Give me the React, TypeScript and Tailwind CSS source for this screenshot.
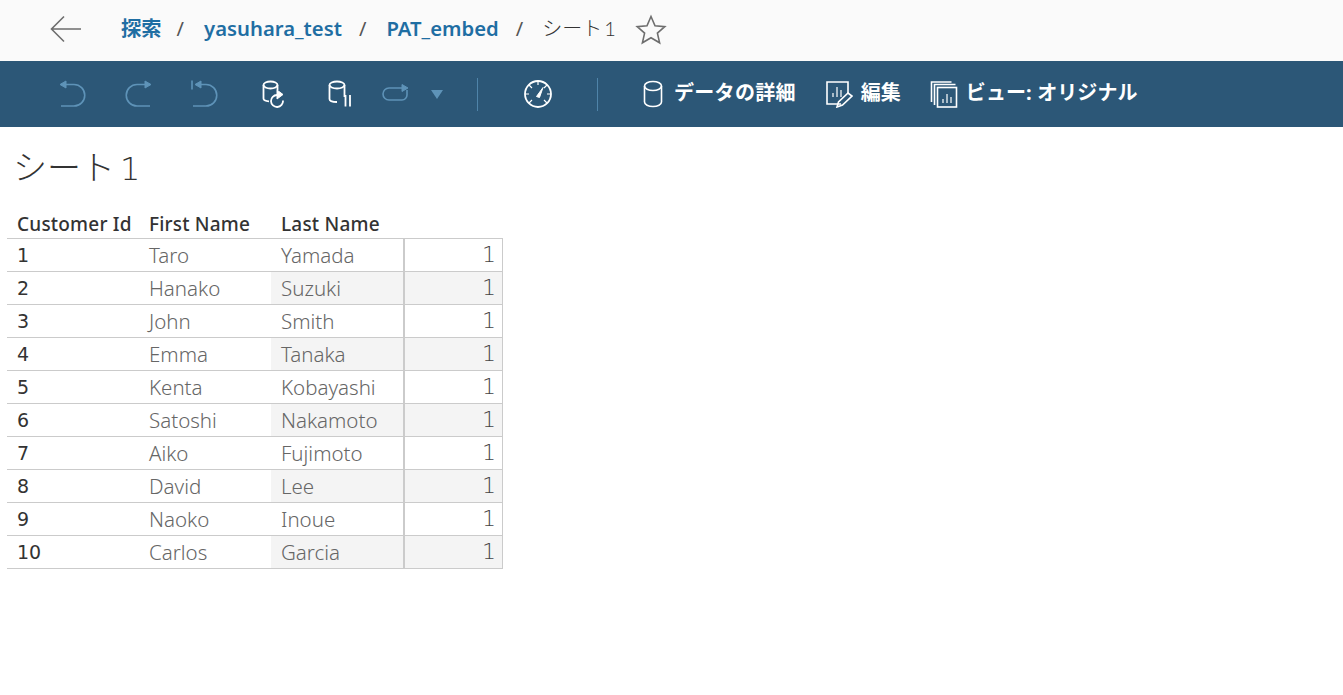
import React from "react";

const rows = [
  ["1", "Taro", "Yamada"],
  ["2", "Hanako", "Suzuki"],
  ["3", "John", "Smith"],
  ["4", "Emma", "Tanaka"],
  ["5", "Kenta", "Kobayashi"],
  ["6", "Satoshi", "Nakamoto"],
  ["7", "Aiko", "Fujimoto"],
  ["8", "David", "Lee"],
  ["9", "Naoko", "Inoue"],
  ["10", "Carlos", "Garcia"],
];

const font = "font-['Noto_Sans','Noto_Sans_CJK_JP',sans-serif]";

function Icon({ w, h, className, children }: { w: number; h: number; className?: string; children: React.ReactNode }) {
  return (
    <svg width={w} height={h} viewBox={`0 0 ${w} ${h}`} fill="none" stroke="currentColor" strokeWidth="1.6" className={className}>
      {children}
    </svg>
  );
}

function Crumb({ children }: { children: React.ReactNode }) {
  return <span className="text-[20.3px] font-semibold text-[#1f6ea3] leading-none">{children}</span>;
}

function Slash({ className }: { className: string }) {
  return <span className={`text-[20px] text-[#555] leading-none ${className}`}>/</span>;
}

export default function App() {
  return (
    <div className={`${font} w-[1343px] h-[695px] bg-white overflow-hidden`}>
      {/* Breadcrumb */}
      <header className="h-[61px] bg-[#fafafa] flex items-center pl-[50px]">
        <Icon w={32} h={28} className="text-[#6e6e6e] mt-[-3px]">
          <path d="M31 14H2M14 1.5 1.5 14 14 26.5" />
        </Icon>
        <div className="flex items-center ml-[39px] mt-[-4px]">
          <Crumb>探索</Crumb>
          <Slash className="ml-[15px] mr-[20px]" />
          <Crumb>yasuhara_test</Crumb>
          <Slash className="ml-[17px] mr-[20px]" />
          <Crumb>PAT_embed</Crumb>
          <Slash className="ml-[17px] mr-[19px]" />
          <span className="text-[20px] text-[#333] font-light leading-none">
            シート<span className="font-['Lato'] ml-[2px]">1</span>
          </span>
        </div>
        <Icon w={32} h={32} className="text-[#6e6e6e] ml-[19px] mt-[-2px]">
          <path d="M16 2.5l4 9.2 9.8.9-7.4 6.5 2.2 9.7-8.6-5.1-8.6 5.1 2.2-9.7L2.2 12.6l9.8-.9z" />
        </Icon>
      </header>

      {/* Toolbar */}
      <div className="h-[66px] bg-[#2c5777] flex items-center pl-[58px] text-white">
        <Icon w={28} h={28} className="text-[#5e93b8]">
          <path d="M3 4.5H16a10.75 10.75 0 0 1 0 21.5H3" />
          <path d="M2 4.5l6-3.5v7z" fill="currentColor" strokeWidth="1" />
        </Icon>
        <Icon w={28} h={28} className="text-[#5e93b8] ml-[39px]">
          <path d="M25 4.5H12a10.75 10.75 0 0 0 0 21.5h13" />
          <path d="M26 4.5l-6-3.5v7z" fill="currentColor" strokeWidth="1" />
        </Icon>
        <Icon w={28} h={28} className="text-[#5e93b8] ml-[37px]">
          <path d="M2 0.5v9" />
          <path d="M6 4.5H16a10.75 10.75 0 0 1 0 21.5H3" />
          <path d="M5 4.5l6-3.5v7z" fill="currentColor" strokeWidth="1" />
        </Icon>
        <Icon w={26} h={28} className="ml-[44px]">
          <ellipse cx="8.5" cy="5" rx="7" ry="3.5" strokeWidth="1.8" />
          <path d="M1.5 5v13.5c0 1.500 2 2.500 5.500 2.800M15.5 5v5" strokeWidth="1.8" />
          <path d="M15 15A6 6 0 1 0 21 20.5" strokeWidth="1.8" />
          <path d="M15 10l6 4.5-6 4.5z" fill="currentColor" strokeWidth="1" />
        </Icon>
        <Icon w={26} h={28} className="ml-[40px]">
          <ellipse cx="9" cy="5" rx="7.5" ry="3.5" strokeWidth="1.8" />
          <path d="M1.5 5v14c0 1.800 3 3 7.500 3M16.5 5v12" strokeWidth="1.8" />
          <path d="M17.5 15v11.5M22 15v11.5" strokeWidth="1.8" />
        </Icon>
        <Icon w={30} h={22} className="text-[#5e93b8] ml-[26px]">
          <path d="M25 5H9a6 6 0 0 0 0 12h13a5 5 0 0 0 5-5V7" />
          <path d="M28 5l-6-3.500v7z" fill="currentColor" strokeWidth="1" />
        </Icon>
        <div className="ml-[21px] w-0 h-0 border-x-[6px] border-x-transparent border-t-[9px] border-t-[#5e93b8]" />
        <div className="ml-[34px] w-px h-[33px] bg-[#4f84a9]" />
        <Icon w={30} h={30} className="ml-[45px]">
          <circle cx="15" cy="15" r="13" strokeWidth="1.8" />
          <path d="M15 2v4M2 15h4M24 15h4M6 6l3 3M21 21l3 3M6 24l3-3M24 6l-3 3" strokeWidth="1.2" />
          <path d="M13.5 17.5 20 8.5l-3.500 10z" fill="currentColor" strokeWidth="1" />
        </Icon>
        <div className="ml-[44px] w-px h-[33px] bg-[#4f84a9]" />
        <Icon w={22} h={28} className="ml-[44px]">
          <ellipse cx="11" cy="6" rx="8.5" ry="4.5" />
          <path d="M2.5 6v16c0 2.500 3.800 4.500 8.500 4.500s8.500-2 8.500-4.500V6" />
        </Icon>
        <span className="ml-[10px] text-[20px] font-bold leading-none tracking-[0.3px] mt-[-2px]">データの詳細</span>
        <Icon w={28} h={28} className="ml-[29px]">
          <path d="M16 24H2V2h21v11" />
          <path d="M8 17v-4M12 17V7M16 17v-7" strokeWidth="1.2" />
          <path d="M12 27l1.500-5L23 13l4 3-9.500 9z" />
        </Icon>
        <span className="ml-[8px] text-[20px] font-bold leading-none mt-[-2px]">編集</span>
        <Icon w={28} h={28} className="ml-[29px]">
          <path d="M1.5 22V2h20" />
          <path d="M4.5 25V4.500h21" />
          <rect x="7.5" y="7.5" width="19" height="19.5" />
          <path d="M13 23v-4M17 23v-9M21 23v-6" strokeWidth="1.2" />
        </Icon>
        <span className="ml-[8px] text-[20px] font-bold leading-none tracking-[0.1px] mt-[-2px]">ビュー: オリジナル</span>
      </div>

      {/* Sheet */}
      <h1 className="text-[34px] font-light text-[#333] leading-none pl-[13px] pt-[23px] h-[85px]">
        シート<span className="font-['DejaVu_Sans'] font-extralight text-[32px] ml-[5px]">1</span>
      </h1>

      <div className="ml-[7px] w-[496px]">
        <div className="grid grid-cols-[132px_132px_132px_100px] h-[27px] items-center text-[19px] leading-none font-medium tracking-[0.2px] text-[#333] border-b border-[#cbcbcb] pb-[2px]">
          <span className="pl-[10px] whitespace-nowrap">Customer Id</span>
          <span className="pl-[10px]">First Name</span>
          <span className="pl-[10px]">Last Name</span>
        </div>
        {rows.map((r, i) => {
          const zebra = i % 2 === 1;
          return (
            <div key={r[0]} className="grid grid-cols-[132px_132px_132px_100px] h-[33px] text-[20.5px] leading-none font-light text-[#666] border-b border-[#cbcbcb]">
              <span className="pl-[10px] font-['DejaVu_Sans'] text-[19px] font-normal text-[#333] flex items-center">{r[0]}</span>
              <span className="pl-[10px] flex items-center">{r[1]}</span>
              <span className={`pl-[10px] flex items-center ${zebra ? "bg-[#f4f4f4]" : ""}`}>{r[2]}</span>
              <span className={`pr-[6px] font-['DejaVu_Sans'] font-extralight text-[22px] text-[#444] flex items-center justify-end border-l-2 border-r border-x-[#cbcbcb] ${zebra ? "bg-[#f4f4f4]" : ""}`}>1</span>
            </div>
          );
        })}
      </div>
    </div>
  );
}
